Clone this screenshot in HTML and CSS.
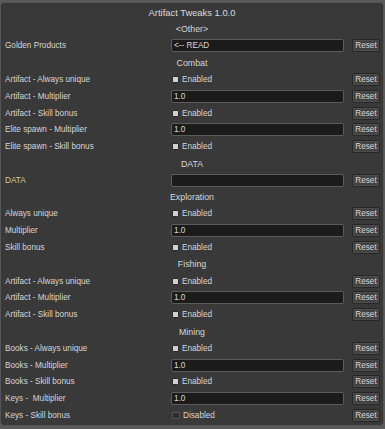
FILE: index.html
```html
<!DOCTYPE html>
<html>
<head>
<meta charset="utf-8">
<link rel="stylesheet" href="styles.css">
</head>
<body>
<div class="panel">
  <div class="title">Artifact Tweaks 1.0.0</div>
  <div class="head">&lt;Other&gt;</div>
  <div class="row"><span class="label">Golden Products</span><span class="field">&lt;-- READ</span><button class="reset">Reset</button></div>
  <div class="head">Combat</div>
  <div class="row"><span class="label">Artifact - Always unique</span><span class="check"><i class="box on"></i>Enabled</span><button class="reset">Reset</button></div>
  <div class="row"><span class="label">Artifact - Multiplier</span><span class="field">1.0</span><button class="reset">Reset</button></div>
  <div class="row"><span class="label">Artifact - Skill bonus</span><span class="check"><i class="box on"></i>Enabled</span><button class="reset">Reset</button></div>
  <div class="row"><span class="label">Elite spawn - Multiplier</span><span class="field">1.0</span><button class="reset">Reset</button></div>
  <div class="row"><span class="label">Elite spawn - Skill bonus</span><span class="check"><i class="box on"></i>Enabled</span><button class="reset">Reset</button></div>
  <div class="head">DATA</div>
  <div class="row"><span class="label data">DATA</span><span class="field"></span><button class="reset">Reset</button></div>
  <div class="head">Exploration</div>
  <div class="row"><span class="label">Always unique</span><span class="check"><i class="box on"></i>Enabled</span><button class="reset">Reset</button></div>
  <div class="row"><span class="label">Multiplier</span><span class="field">1.0</span><button class="reset">Reset</button></div>
  <div class="row"><span class="label">Skill bonus</span><span class="check"><i class="box on"></i>Enabled</span><button class="reset">Reset</button></div>
  <div class="head">Fishing</div>
  <div class="row"><span class="label">Artifact - Always unique</span><span class="check"><i class="box on"></i>Enabled</span><button class="reset">Reset</button></div>
  <div class="row"><span class="label">Artifact - Multiplier</span><span class="field">1.0</span><button class="reset">Reset</button></div>
  <div class="row"><span class="label">Artifact - Skill bonus</span><span class="check"><i class="box on"></i>Enabled</span><button class="reset">Reset</button></div>
  <div class="head">Mining</div>
  <div class="row"><span class="label">Books - Always unique</span><span class="check"><i class="box on"></i>Enabled</span><button class="reset">Reset</button></div>
  <div class="row"><span class="label">Books - Multiplier</span><span class="field">1.0</span><button class="reset">Reset</button></div>
  <div class="row"><span class="label">Books - Skill bonus</span><span class="check"><i class="box on"></i>Enabled</span><button class="reset">Reset</button></div>
  <div class="row"><span class="label">Keys -&nbsp; Multiplier</span><span class="field">1.0</span><button class="reset">Reset</button></div>
  <div class="row"><span class="label">Keys - Skill bonus</span><span class="check"><i class="box"></i>Disabled</span><button class="reset">Reset</button></div>
</div>
</body>
</html>
```
FILE: styles.css
```css
html, body {
  margin: 0;
  padding: 0;
  background: #5a5a5a;
}
body {
  width: 385px;
  height: 429px;
  overflow: hidden;
  font-family: "Liberation Sans", Arial, sans-serif;
  font-size: 8.2px;
  color: #d6d6d6;
}
.panel {
  margin: 3px 2px 0 1px;
  height: 422px;
  box-sizing: border-box;
  background: #393939;
  border-radius: 4px;
  padding: 1px 0 0 0;
  box-shadow: 0 0 1px #2a2a2a;
}
.title, .head {
  height: 16.8px;
  display: flex;
  align-items: center;
  justify-content: center;
}
.head {
  font-size: 8.8px;
}
.title {
  font-size: 9.4px;
  color: #dcdcdc;
}
.row {
  height: 16.8px;
  display: grid;
  grid-template-columns: 166px 181px 28px;
  align-items: center;
  padding-left: 4px;
}
.label {
  white-space: nowrap;
}
.label.data {
  color: #cfcf9a;
}
.field {
  width: 173px;
  height: 13px;
  box-sizing: border-box;
  background: #1b1b1b;
  border: 1px solid #5c5c5c;
  border-radius: 2px;
  padding-left: 2px;
  display: flex;
  align-items: center;
  color: #d8d8d8;
}
.check {
  display: flex;
  align-items: center;
  padding-left: 1px;
}
.box {
  width: 5px;
  height: 5px;
  border: 1px solid #2a2a2a;
  background: #d0d0d0;
  border-radius: 1px;
  margin-right: 3px;
}
.box:not(.on) {
  width: 6px;
  background: #2b2b2b;
  border-color: #555;
}
.reset {
  width: 28px;
  height: 13px;
  padding: 0;
  margin: 0;
  box-sizing: border-box;
  background: #414141;
  border: 1px solid #262626;
  border-radius: 2px;
  box-shadow: inset 0 0 0 1px #4e4e4e;
  color: #d8d8d8;
  font-family: "Liberation Sans", Arial, sans-serif;
  font-size: 8.2px;
  line-height: 11px;
}
```
